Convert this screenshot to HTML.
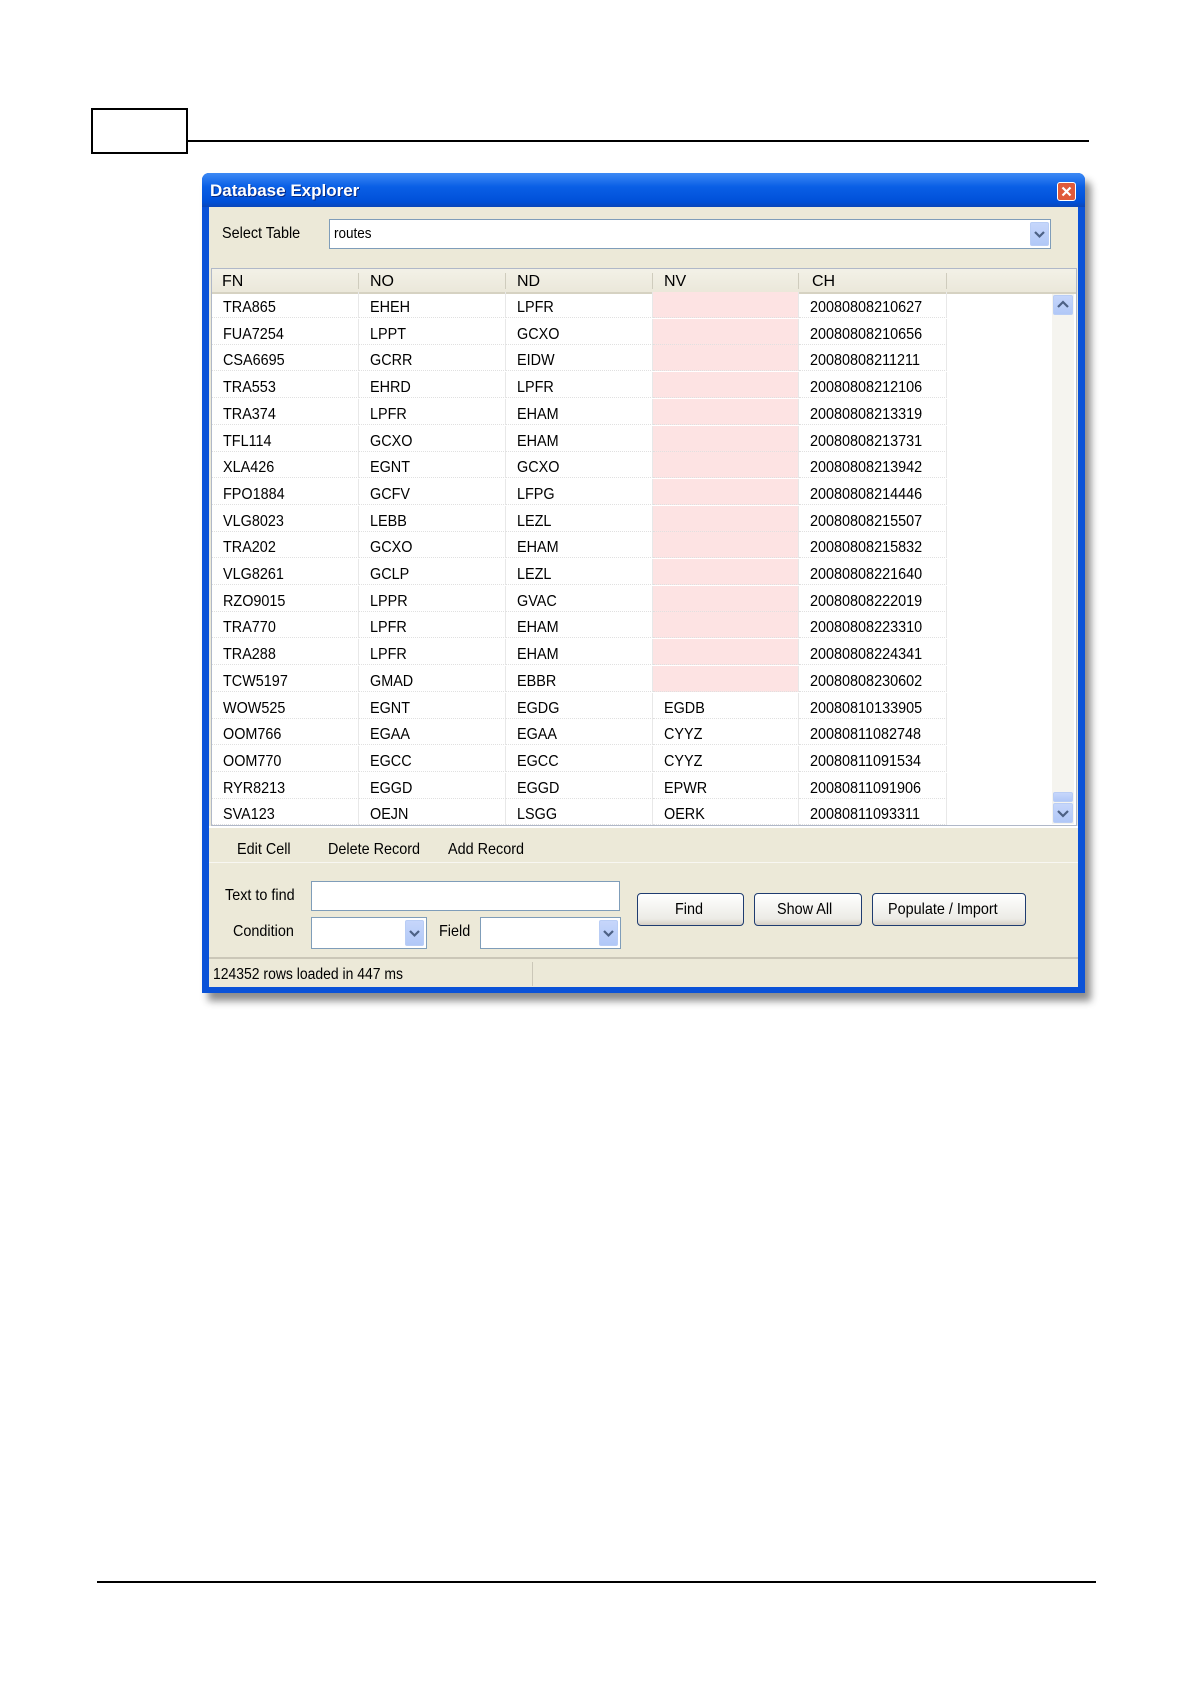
<!DOCTYPE html>
<html><head><meta charset="utf-8"><style>
body{margin:0;width:1190px;height:1684px;background:#fff;position:relative;font-family:"Liberation Sans",sans-serif;overflow:hidden}
.a{position:absolute}
.t{font-size:16px;color:#000;white-space:nowrap;transform:scaleX(.9);transform-origin:left center;line-height:20px}
.win{left:202px;top:173px;width:883px;height:820px;background:#0a52d8;border-radius:7px 7px 0 0;box-shadow:6px 8px 8px rgba(0,0,0,.45)}
.title{left:202px;top:173px;width:883px;height:34px;border-radius:7px 7px 0 0;background:linear-gradient(#3d8af5,#0a5fe6 40%,#0050d8 85%,#0a46b8)}
.body{left:209px;top:207px;width:869px;height:780px;background:#ece9d8}
.row{position:absolute;left:0;height:26.7px;width:735px}
.cell{position:absolute;top:0;height:26px;border-right:1px solid #e8e8e8;border-bottom:1px dotted #e0e0e0;font-size:16px;line-height:26px;padding-left:11px;padding-top:3px;box-sizing:border-box}
.btn{position:absolute;border:1px solid #1f3c70;border-radius:4px;background:linear-gradient(#fff,#ecebe6 80%,#d6d0c5);font-size:16px;text-align:center;box-sizing:border-box}
.dd{position:absolute;width:19px;background:linear-gradient(#c6d6fb,#b1c8f7);border:1px solid #b9cdf5;border-radius:2px;box-sizing:border-box}
.inp{position:absolute;background:#fff;border:1px solid #7f9db9;box-sizing:border-box}
</style></head><body>
<div class="a" style="left:91px;top:108px;width:97px;height:46px;border:2px solid #000;box-sizing:border-box"></div>
<div class="a" style="left:188px;top:140px;width:901px;height:2px;background:#000"></div>
<div class="a" style="left:97px;top:1581px;width:999px;height:2px;background:#000"></div>

<div class="a win"></div>
<div class="a title"></div>
<div class="a" style="left:210px;top:181px;color:#fff;font-weight:bold;font-size:17px;line-height:20px;text-shadow:1px 1px #0a2a80">Database Explorer</div>
<div class="a" style="left:1057px;top:182px;width:19px;height:19px;border:1px solid #fff;border-radius:3px;background:#e05a3a;box-sizing:border-box"><svg width="17" height="17" viewBox="0 0 17 17"><path d="M4.5 4.5l8 8M12.5 4.5l-8 8" stroke="#fff" stroke-width="2.2"/></svg></div>
<div class="a body"></div>

<div class="a t" style="left:222px;top:224px">Select Table</div>
<div class="inp" style="left:329px;top:219px;width:722px;height:30px"></div>
<div class="a t" style="left:334px;top:224px;font-size:15px">routes</div>
<div class="dd" style="left:1030px;top:222px;height:24px"><svg width="17" height="22"><path d="M4 9l4.5 4.5L13 9" stroke="#4d6185" stroke-width="2.2" fill="none"/></svg></div>

<div class="a" style="left:211px;top:268px;width:866px;height:558px;background:#fff;border:1px solid #b0b8c8;box-sizing:border-box"></div>
<div class="a" style="left:212px;top:269px;width:864px;height:23px;background:linear-gradient(#f3f1e7,#ebe8da);border-bottom:2px solid #d6d2c2"></div>
<div class="a" style="left:212px;top:273px;width:864px;height:20px;font-size:16px">
<span class="a" style="left:10px">FN</span><span class="a" style="left:158px">NO</span><span class="a" style="left:305px">ND</span><span class="a" style="left:452px">NV</span><span class="a" style="left:600px">CH</span>
<span class="a" style="left:146px;top:0px;width:1px;height:16px;background:#cfccbd"></span><span class="a" style="left:293px;top:0px;width:1px;height:16px;background:#cfccbd"></span><span class="a" style="left:440px;top:0px;width:1px;height:16px;background:#cfccbd"></span><span class="a" style="left:586px;top:0px;width:1px;height:16px;background:#cfccbd"></span><span class="a" style="left:734px;top:0px;width:1px;height:16px;background:#cfccbd"></span>
</div>
<div class="a" id="g" style="left:212px;top:292px;width:735px;height:534px"></div>
<div class="a" style="left:1052px;top:294px;width:22px;height:530px;background:#f5f4ef"></div>
<div class="dd" style="left:1053px;top:295px;height:20px;width:20px"><svg width="18" height="18"><path d="M4 11l5-5 5 5" stroke="#4d6185" stroke-width="2.2" fill="none"/></svg></div>
<div class="dd" style="left:1053px;top:792px;height:10px;width:20px"></div>
<div class="dd" style="left:1053px;top:803px;height:20px;width:20px"><svg width="18" height="18"><path d="M4 7l5 5 5-5" stroke="#4d6185" stroke-width="2.2" fill="none"/></svg></div>

<div class="a" style="left:209px;top:826px;width:869px;height:2px;background:#fff"></div>
<div class="a t" style="left:237px;top:840px">Edit Cell</div>
<div class="a t" style="left:328px;top:840px">Delete Record</div>
<div class="a t" style="left:448px;top:840px">Add Record</div>
<div class="a" style="left:209px;top:862px;width:869px;height:1px;background:#f8f7f2"></div>

<div class="a t" style="left:225px;top:886px">Text to find</div>
<div class="inp" style="left:311px;top:881px;width:309px;height:30px"></div>
<div class="a t" style="left:233px;top:922px">Condition</div>
<div class="inp" style="left:311px;top:917px;width:116px;height:32px"></div>
<div class="dd" style="left:405px;top:920px;height:26px"><svg width="17" height="24"><path d="M4 10l4.5 4.5L13 10" stroke="#4d6185" stroke-width="2.2" fill="none"/></svg></div>
<div class="a t" style="left:439px;top:922px">Field</div>
<div class="inp" style="left:480px;top:917px;width:141px;height:32px"></div>
<div class="dd" style="left:599px;top:920px;height:26px"><svg width="17" height="24"><path d="M4 10l4.5 4.5L13 10" stroke="#4d6185" stroke-width="2.2" fill="none"/></svg></div>

<div class="btn" style="left:637px;top:893px;width:107px;height:33px;line-height:31px"><span class="t" style="display:inline-block">Find</span></div>
<div class="btn" style="left:754px;top:893px;width:108px;height:33px;line-height:31px"><span class="t" style="display:inline-block">Show All</span></div>
<div class="btn" style="left:872px;top:893px;width:154px;height:33px;line-height:31px"><span class="t" style="display:inline-block">Populate / Import</span></div>

<div class="a" style="left:209px;top:957px;width:869px;height:2px;background:#cbc7b8"></div>
<div class="a" style="left:532px;top:962px;width:1px;height:24px;background:#cbc7b8"></div>
<div class="a t" style="left:213px;top:965px;font-size:15.5px">124352 rows loaded in 447 ms</div>

<script>
var d=[["TRA865","EHEH","LPFR","","20080808210627"],["FUA7254","LPPT","GCXO","","20080808210656"],["CSA6695","GCRR","EIDW","","20080808211211"],["TRA553","EHRD","LPFR","","20080808212106"],["TRA374","LPFR","EHAM","","20080808213319"],["TFL114","GCXO","EHAM","","20080808213731"],["XLA426","EGNT","GCXO","","20080808213942"],["FPO1884","GCFV","LFPG","","20080808214446"],["VLG8023","LEBB","LEZL","","20080808215507"],["TRA202","GCXO","EHAM","","20080808215832"],["VLG8261","GCLP","LEZL","","20080808221640"],["RZO9015","LPPR","GVAC","","20080808222019"],["TRA770","LPFR","EHAM","","20080808223310"],["TRA288","LPFR","EHAM","","20080808224341"],["TCW5197","GMAD","EBBR","","20080808230602"],["WOW525","EGNT","EGDG","EGDB","20080810133905"],["OOM766","EGAA","EGAA","CYYZ","20080811082748"],["OOM770","EGCC","EGCC","CYYZ","20080811091534"],["RYR8213","EGGD","EGGD","EPWR","20080811091906"],["SVA123","OEJN","LSGG","OERK","20080811093311"]];
var L=[0,147,294,441,587],W=[147,147,147,146,148],h="";
d.forEach(function(r,i){h+='<div class="row" style="top:'+(i*26.7)+'px">';r.forEach(function(c,j){var bg=(j==3&&i<15)?'background:#fde3e3;':'';h+='<div class="cell" style="left:'+L[j]+'px;width:'+W[j]+'px;'+bg+'"><span class="t" style="display:inline-block">'+c+'</span></div>'});h+='</div>'});
document.getElementById('g').innerHTML=h;
</script>
</body></html>
